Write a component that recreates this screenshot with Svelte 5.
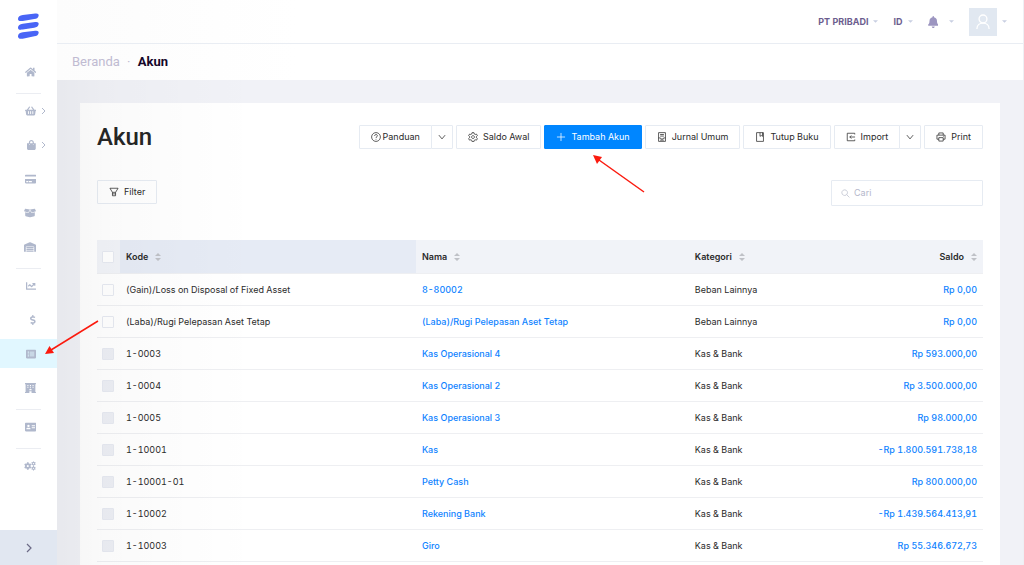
<script>
  const icons = {
    home: { w: 576, d: 'M280.37 148.26L96 300.11V464a16 16 0 0 0 16 16l112.06-.29a16 16 0 0 0 15.92-16V368a16 16 0 0 1 16-16h64a16 16 0 0 1 16 16v95.64a16 16 0 0 0 16 16.05L464 480a16 16 0 0 0 16-16V300L295.67 148.26a12.19 12.19 0 0 0-15.3 0zM571.6 251.47L488 182.56V44.05a12 12 0 0 0-12-12h-56a12 12 0 0 0-12 12v72.61L318.47 43a48 48 0 0 0-61 0L4.34 251.47a12 12 0 0 0-1.6 16.9l25.5 31A12 12 0 0 0 45.15 301l235.22-193.74a12.19 12.19 0 0 1 15.3 0L530.9 301a12 12 0 0 0 16.9-1.6l25.5-31a12 12 0 0 0-1.7-16.93z' },
    basket: { w: 576, d: 'M576 216v16c0 13.255-10.745 24-24 24h-8l-26.113 182.788C514.509 462.435 494.257 480 470.37 480H105.63c-23.887 0-44.139-17.565-47.518-41.212L32 256h-8c-13.255 0-24-10.745-24-24v-16c0-13.255 10.745-24 24-24h67.341l106.78-146.821c10.395-14.292 30.407-17.453 44.701-7.058 14.293 10.395 17.453 30.408 7.058 44.701L170.477 192h235.046L326.12 82.821c-10.395-14.292-7.234-34.306 7.059-44.701 14.291-10.395 34.306-7.235 44.701 7.058L484.659 192H552c13.255 0 24 10.745 24 24zM312 392V280c0-13.255-10.745-24-24-24s-24 10.745-24 24v112c0 13.255 10.745 24 24 24s24-10.745 24-24zm112 0V280c0-13.255-10.745-24-24-24s-24 10.745-24 24v112c0 13.255 10.745 24 24 24s24-10.745 24-24zm-224 0V280c0-13.255-10.745-24-24-24s-24 10.745-24 24v112c0 13.255 10.745 24 24 24s24-10.745 24-24z' },
    bag: { w: 448, d: 'M352 160v-32C352 57.42 294.579 0 224 0 153.42 0 96 57.42 96 128v32H0v272c0 44.183 35.817 80 80 80h288c44.183 0 80-35.817 80-80V160h-96zm-192-32c0-35.29 28.71-64 64-64s64 28.71 64 64v32H160v-32zm160 120c-13.255 0-24-10.745-24-24s10.745-24 24-24 24 10.745 24 24-10.745 24-24 24zm-192 0c-13.255 0-24-10.745-24-24s10.745-24 24-24 24 10.745 24 24-10.745 24-24 24z' },
    card: { w: 576, d: 'M0 432c0 26.5 21.5 48 48 48h480c26.5 0 48-21.5 48-48V256H0v176zm192-68c0-6.6 5.4-12 12-12h136c6.6 0 12 5.4 12 12v40c0 6.6-5.4 12-12 12H204c-6.6 0-12-5.4-12-12v-40zm-128 0c0-6.6 5.4-12 12-12h72c6.6 0 12 5.4 12 12v40c0 6.6-5.4 12-12 12H76c-6.6 0-12-5.4-12-12v-40zM576 80v48H0V80c0-26.5 21.5-48 48-48h480c26.5 0 48 21.5 48 48z' },
    box: { w: 640, d: 'M425.7 256c-16.9 0-32.8-9-41.4-23.4L320 126l-64.2 106.6c-8.7 14.5-24.6 23.5-41.5 23.5-4.5 0-9-.6-13.3-1.9L64 215v178c0 14.7 10 27.5 24.2 31l216.2 54.1c10.2 2.5 20.9 2.5 31 0L551.8 424c14.2-3.6 24.2-16.4 24.2-31V215l-137 39.1c-4.3 1.3-8.8 1.9-13.3 1.9zm212.6-112.2L586.8 41c-3.1-6.2-9.8-9.8-16.7-8.9L320 64l91.7 152.1c3.8 6.3 11.4 9.3 18.5 7.3l197.9-56.5c9.9-2.9 14.7-13.9 10.2-23.1zM53.2 41L1.7 143.8c-4.6 9.2.3 20.2 10.1 23l197.9 56.5c7.1 2 14.7-1 18.5-7.3L320 64 69.8 32.1c-6.9-.8-13.5 2.7-16.6 8.9z' },
    warehouse: { w: 640, d: 'M504 352H136.4c-4.4 0-8 3.6-8 8l-.1 48c0 4.4 3.6 8 8 8H504c4.4 0 8-3.6 8-8v-48c0-4.4-3.6-8-8-8zm0 96H136.1c-4.4 0-8 3.6-8 8l-.1 48c0 4.4 3.6 8 8 8h368c4.4 0 8-3.6 8-8v-48c0-4.4-3.6-8-8-8zm0-192H136.6c-4.4 0-8 3.6-8 8l-.1 48c0 4.4 3.6 8 8 8H504c4.4 0 8-3.6 8-8v-48c0-4.4-3.6-8-8-8zm106.5-139L338.4 3.7a48.15 48.15 0 0 0-36.9 0L29.5 117C11.7 124.5 0 141.9 0 161.3V504c0 4.4 3.6 8 8 8h80c4.4 0 8-3.6 8-8V256c0-17.6 14.6-32 32.6-32h382.8c18 0 32.6 14.4 32.6 32v248c0 4.4 3.6 8 8 8h80c4.4 0 8-3.6 8-8V161.3c0-19.4-11.7-36.8-29.5-44.3z' },
    chart: { w: 512, d: 'M496 384H64V80c0-8.84-7.16-16-16-16H16C7.16 64 0 71.16 0 80v336c0 17.67 14.33 32 32 32h464c8.84 0 16-7.16 16-16v-32c0-8.84-7.16-16-16-16zM464 96H345.94c-21.38 0-32.09 25.85-16.97 40.97l32.4 32.4L288 242.75l-73.37-73.37c-12.5-12.5-32.76-12.5-45.25 0l-68.69 68.69c-6.25 6.25-6.25 16.38 0 22.63l22.62 22.62c6.25 6.25 16.38 6.25 22.63 0L192 237.25l73.37 73.37c12.5 12.5 32.76 12.5 45.25 0l96-96 32.4 32.4c15.12 15.12 40.97 4.41 40.97-16.97V112c.01-8.84-7.15-16-15.99-16z' },
    dollar: { w: 288, d: 'M209.2 233.4l-108-31.6C88.7 198.2 80 186.5 80 173.5c0-16.3 13.2-29.5 29.5-29.5h66.3c12.2 0 24.2 3.7 34.2 10.5 6.1 4.1 14.3 3.1 19.5-2l34.8-34c7.1-6.9 6.1-18.4-1.8-24.5C238 74.8 207.4 64.1 176 64V16c0-8.8-7.2-16-16-16h-32c-8.8 0-16 7.2-16 16v48h-2.5C45.8 64-5.4 118.7.5 183.6c4.2 46.1 39.4 83.6 83.8 96.6l102.5 30c12.5 3.7 21.2 15.3 21.2 28.3 0 16.3-13.2 29.5-29.5 29.5h-66.3C100 368 88 364.3 78 357.5c-6.1-4.1-14.3-3.1-19.5 2l-34.8 34c-7.1 6.9-6.1 18.4 1.8 24.5 24.5 19.2 55.1 29.9 86.5 30v48c0 8.8 7.2 16 16 16h32c8.8 0 16-7.2 16-16v-48.2c46.6-.9 90.3-28.6 105.7-72.7 21.5-61.6-14.6-124.8-72.5-141.7z' },
    list: { w: 512, d: 'M464 480H48c-26.500 0-48-21.500-48-48V80c0-26.500 21.500-48 48-48h416c26.500 0 48 21.500 48 48v352c0 26.500-21.500 48-48 48zM90 132v56h56v-56zM90 228v56h56v-56zM90 324v56h56v-56zM190 140v40h232v-40zM190 236v40h232v-40zM190 332v40h232v-40z' },
    hospital: { w: 560, d: 'M0 4h560v54h-30v400h30v50H336v-90H224v90H0v-50h30V58H0zM120 104v48h56v-48zM252 104v48h56v-48zM384 104v48h56v-48zM120 196v48h56v-48zM252 196v48h56v-48zM384 196v48h56v-48zM260 290v36h-40v40h120v-40h-40v-36z' },
    idcard: { w: 576, d: 'M48 32h480c26.500 0 48 21.500 48 48v352c0 26.500-21.500 48-48 48H48c-26.500 0-48-21.500-48-48V80c0-26.500 21.500-48 48-48zM176 140a60 60 0 1 0 1 0zM72 376h208v-30c0-40-30-56-56-56h-96c-26 0-56 16-56 56zM344 170v44h168v-44zM344 270v44h168v-44z' },
    cogs: { w: 640, d: 'M160 60h84l12 56 38 22 54-18 42 72-42 38v52l42 38-42 72-54-18-38 22-12 56h-84l-12-56-38-22-54 18-42-72 42-38v-52l-42-38 42-72 54 18 38-22zM202 200a56 56 0 1 0 1 0zM482 10h50l8 32 24 14 32-10 25 43-24 23v28l24 23-25 43-32-10-24 14-8 32h-50l-8-32-24-14-32 10-25-43 24-23v-28l-24-23 25-43 32 10 24-14zM507 92a34 34 0 1 0 1 0zM482 262h50l8 32 24 14 32-10 25 43-24 23v28l24 23-25 43-32-10-24 14-8 32h-50l-8-32-24-14-32 10-25-43 24-23v-28l-24-23 25-43 32 10 24-14zM507 344a34 34 0 1 0 1 0z' },
    bell: { w: 448, d: 'M224 512c35.32 0 63.97-28.65 63.97-64H160.03c0 35.35 28.65 64 63.97 64zm215.39-149.71c-19.32-20.76-55.47-51.99-55.47-154.29 0-77.7-54.48-139.9-127.94-155.16V32c0-17.67-14.32-32-31.98-32s-31.98 14.33-31.98 32v20.84C118.56 68.1 64.08 130.3 64.08 208c0 102.3-36.15 133.53-55.47 154.29-6 6.45-8.66 14.16-8.61 21.71.11 16.4 12.98 32 32.1 32h383.8c19.12 0 32-15.6 32.1-32 .05-7.55-2.61-15.27-8.61-21.71z' }
  };

  // Thin outlined icons, drawn on a 16 unit grid
  const outlines = {
    help: 'M8 1a7 7 0 1 0 .01 0zM5.800 6.300c0-3 4.400-3 4.400-.3 0 1.500-2.200 1.800-2.200 3.500M8 11v1.200',
    gear: 'M6.500 1h3l.5 2.200 1.400.8 2.100-.7 1.500 2.600-1.600 1.500v1.600l1.600 1.500-1.500 2.600-2.100-.7-1.400.8-.5 2.200h-3L6 13.200l-1.400-.8-2.100.7L1 10.500 2.600 9V7.400L1 5.900l1.500-2.600 2.100.7L6 3.200zM8 5.800a2.300 2.300 0 1 0 .01 0z',
    plus: 'M8 1.500v13M1.500 8h13',
    journal: 'M2.500 1h11v14h-11zM5 4h6M5 6.500h6M2.500 9.500h3l1 1.800h3l1-1.800h3M5 13h6',
    book: 'M2.500 1h11v14h-11zM8 1v6l2-1.500L12 7V1',
    import: 'M14 4V2H2v12h12v-2M14.500 8H6M8.500 5.500L6 8l2.500 2.500',
    print: 'M4.500 5V1.500h7V5M4.500 11.500h-3V5h13v6.500h-3M4.500 9h7v5.500h-7zM11.500 7h1',
    filter: 'M1.500 2h13l-4 6.500h-5zM5.500 8.500V14h5V8.500M5.500 11h5',
    search: 'M6.500 1.500a5 5 0 1 0 .01 0zM10.200 10.200L15 15',
    down: 'M3 5l5 6 5-6'
  };

  const groups = [
    [{ icon: 'home', label: 'Beranda' }],
    [
      { icon: 'basket', label: 'Penjualan', more: true },
      { icon: 'bag', label: 'Pembelian', more: true },
      { icon: 'card', label: 'Biaya' },
      { icon: 'box', label: 'Produk' },
      { icon: 'warehouse', label: 'Inventori' }
    ],
    [
      { icon: 'chart', label: 'Laporan' },
      { icon: 'dollar', label: 'Kas & Bank' },
      { icon: 'list', label: 'Akun', active: true },
      { icon: 'hospital', label: 'Aset Tetap' }
    ],
    [{ icon: 'idcard', label: 'Kontak' }],
    [{ icon: 'cogs', label: 'Pengaturan' }]
  ];

  const actions = [
    { icon: 'help', text: 'Panduan', split: true, tight: true },
    { icon: 'gear', text: 'Saldo Awal' },
    { icon: 'plus', text: 'Tambah Akun', primary: true },
    { icon: 'journal', text: 'Jurnal Umum' },
    { icon: 'book', text: 'Tutup Buku' },
    { icon: 'import', text: 'Import', split: true },
    { icon: 'print', text: 'Print' }
  ];

  const columns = ['Kode', 'Nama', 'Kategori', 'Saldo'];

  const rows = [
    ['(Gain)/Loss on Disposal of Fixed Asset', '8-80002', 'Beban Lainnya', 'Rp 0,00', false],
    ['(Laba)/Rugi Pelepasan Aset Tetap', '(Laba)/Rugi Pelepasan Aset Tetap', 'Beban Lainnya', 'Rp 0,00', false],
    ['1-0003', 'Kas Operasional 4', 'Kas & Bank', 'Rp 593.000,00', true],
    ['1-0004', 'Kas Operasional 2', 'Kas & Bank', 'Rp 3.500.000,00', true],
    ['1-0005', 'Kas Operasional 3', 'Kas & Bank', 'Rp 98.000,00', true],
    ['1-10001', 'Kas', 'Kas & Bank', '-Rp 1.800.591.738,18', true],
    ['1-10001-01', 'Petty Cash', 'Kas & Bank', 'Rp 800.000,00', true],
    ['1-10002', 'Rekening Bank', 'Kas & Bank', '-Rp 1.439.564.413,91', true],
    ['1-10003', 'Giro', 'Kas & Bank', 'Rp 55.346.672,73', true]
  ];
</script>

{#snippet glyph(name)}
  <svg class="glyph" viewBox="0 0 {icons[name].w} 512" aria-hidden="true"><path d={icons[name].d} fill="currentColor" fill-rule="evenodd" /></svg>
{/snippet}

{#snippet outline(name)}
  <svg class="outline" viewBox="0 0 16 16" aria-hidden="true"><path d={outlines[name]} /></svg>
{/snippet}

{#snippet caret()}
  <svg class="caret" viewBox="0 0 6 3" aria-hidden="true"><path d="M0 0h6L3 3z" fill="currentColor" /></svg>
{/snippet}

<div class="app">
  <aside class="sidebar">
    <a class="logo" href="#home" aria-label="Beranda">
      <svg viewBox="0 0 24 28" aria-hidden="true">
        <g fill="#4965f6">
          <path d="M1 6.500C1 3.500 3 2.500 6 2L19 .4c3-.4 4 .8 3.500 2.600C22 5 20.500 5.900 18 6.300L6 8.200C3 8.600 1.400 8.400 1 6.500z" />
          <path d="M1 15.500c0-3 2-4 5-4.500l13-1.600c3-.4 4 .8 3.500 2.600-.5 2-2 2.900-4.500 3.300L6 17.200c-3 .4-4.600.2-5-1.700z" />
          <path d="M1 24.500c0-3 2-4 5-4.500l13-1.600c3-.4 4 .8 3.500 2.600-.5 2-2 2.900-4.500 3.300L6 26.700c-3 .4-4.600.2-5-2.200z" />
        </g>
      </svg>
    </a>
    <nav aria-label="Menu utama">
      {#each groups as group}
        <div class="group">
          {#each group as item}
            <a class="item" class:active={item.active} href="#{item.icon}" aria-label={item.label}>
              {@render glyph(item.icon)}
              {#if item.more}
                <svg class="more" viewBox="0 0 5 8" aria-hidden="true"><path d="M1 1l3 3-3 3" /></svg>
              {/if}
            </a>
          {/each}
        </div>
      {/each}
    </nav>
    <button class="expand" aria-label="Perluas menu">
      <svg viewBox="0 0 6 10" aria-hidden="true"><path d="M1 1l4 4-4 4" /></svg>
    </button>
  </aside>

  <div class="page">
    <header class="topbar">
      <button class="menu">PT PRIBADI {@render caret()}</button>
      <button class="menu">ID {@render caret()}</button>
      <button class="menu notify" aria-label="Notifikasi">{@render glyph('bell')} {@render caret()}</button>
      <button class="menu" aria-label="Profil">
        <span class="avatar">
          <svg viewBox="0 0 16 18" aria-hidden="true"><circle cx="8" cy="5.500" r="4.500" /><path d="M1 17c0-9 14-9 14 0" /></svg>
        </span>
        {@render caret()}
      </button>
    </header>

    <nav class="crumbs" aria-label="Breadcrumb">
      <a href="#home">Beranda</a><span class="dot">·</span><span class="here">Akun</span>
    </nav>

    <main>
      <section class="panel">
        <div class="heading">
          <h1>Akun</h1>
          <div class="actions">
            {#each actions as a}
              <div class="split">
                <button class="btn" class:primary={a.primary} class:tight={a.tight}>{@render outline(a.icon)}{a.text}</button>
                {#if a.split}
                  <button class="btn toggle" aria-label="Opsi {a.text}">{@render outline('down')}</button>
                {/if}
              </div>
            {/each}
          </div>
        </div>

        <div class="tools">
          <button class="btn">{@render outline('filter')}Filter</button>
          <label class="search">
            {@render outline('search')}
            <input type="search" placeholder="Cari" aria-label="Cari" />
          </label>
        </div>

        <table>
          <colgroup>
            <col class="c-check" /><col class="c-code" /><col class="c-name" /><col /><col />
          </colgroup>
          <thead>
            <tr>
              <th class="check"><input type="checkbox" aria-label="Pilih semua" /></th>
              {#each columns as c, i}
                <th class:sorted={i === 0} class:num={i === 3}>
                  <button class="sort">{c}
                    <svg viewBox="0 0 6 10" aria-hidden="true"><path d="M3 1l3 3H0zM3 9L0 6h6z" fill="currentColor" /></svg>
                  </button>
                </th>
              {/each}
            </tr>
          </thead>
          <tbody>
            {#each rows as [code, name, category, balance, locked]}
              <tr>
                <td class="check"><input type="checkbox" disabled={locked} aria-label="Pilih {code}" /></td>
                <td>{code}</td>
                <td><a href="#akun">{name}</a></td>
                <td>{category}</td>
                <td class="num"><a href="#saldo">{balance}</a></td>
              </tr>
            {/each}
          </tbody>
        </table>
      </section>
    </main>
  </div>

  <svg class="pointer to-add" viewBox="0 0 52 38" aria-hidden="true">
    <path d="M51 37L6 5" stroke="#fb1a0e" stroke-width="1.500" /><path d="M0 0l9 2-5 7z" fill="#fb1a0e" />
  </svg>
  <svg class="pointer to-menu" viewBox="0 0 54 35" aria-hidden="true">
    <path d="M53 1L6 30" stroke="#fb1a0e" stroke-width="1.500" /><path d="M0 34l4.500-8 4.500 7z" fill="#fb1a0e" />
  </svg>
</div>

<style>
  :global(body) {
    background: #fff;
    color: #2b2b2b;
    font: 400 9px/16px Inter, "Open Sans", sans-serif;
    font-variant-numeric: tabular-nums;
  }
  a { color: inherit; text-decoration: none; }
  button, input { font: inherit; color: inherit; box-sizing: border-box; }
  button { border: 0; background: none; padding: 0; cursor: pointer; }

  .app { position: relative; display: flex; min-height: 100vh; overflow: hidden; }

  .sidebar {
    flex: none;
    width: 57px;
    display: flex;
    flex-direction: column;
    color: #b0b8cc;
  }
  .logo { display: block; height: 44px; padding: 13px 0 0 17px; }
  .logo svg { display: block; width: 23px; height: 27px; }
  .group + .group::before {
    content: "";
    display: block;
    height: 1px;
    margin: 7px 16px 2px;
    background: #ebedf2;
  }
  .item { position: relative; display: flex; align-items: center; justify-content: flex-end; height: 29px; padding-right: 21px; }
  .item + .item { margin-top: 5px; }
  .item.active { background: #e1f7ff; }
  .glyph { display: block; height: 10px; width: auto; max-width: 12px; }
  .more { position: absolute; right: 11px; width: 5px; height: 8px; fill: none; stroke: currentColor; }
  .expand { display: flex; align-items: center; justify-content: center; height: 35px; margin-top: auto; background: #e1e7f1; }
  .expand svg { width: 6px; height: 10px; fill: none; stroke: #6b6a86; stroke-width: 1.200; }

  .page { flex: 1; min-width: 0; display: flex; flex-direction: column; border-right: 1px solid #eef0f4; }

  .topbar {
    display: flex;
    align-items: center;
    justify-content: flex-end;
    height: 44px;
    padding-right: 16px;
    border-bottom: 1px solid #e9edf3;
    box-sizing: border-box;
    background: linear-gradient(to right, #fcfcfc, #fff 240px);
    color: #6c5d8e;
    font-weight: 700;
  }
  .menu { display: flex; align-items: center; gap: 5px; }
  .menu + .menu { margin-left: 15px; }
  .caret { display: block; width: 5px; height: 3px; color: #c9cfe2; }
  .notify { gap: 11px; }
  .notify .glyph { height: 12px; color: #9c95c0; }
  .avatar { display: grid; place-items: center; width: 28px; height: 28px; background: #e1e8f1; }
  .avatar svg { width: 14px; height: 16px; fill: none; stroke: #fff; stroke-width: 1.500; }

  .crumbs {
    display: flex;
    align-items: center;
    height: 36px;
    padding-left: 15px;
    background: linear-gradient(to right, #fcfcfc, #fff 240px);
    color: #c0bbd2;
    font-family: Roboto, Inter, sans-serif;
    font-size: 13px;
  }
  .dot { width: 18px; text-align: center; }
  .here { color: #150629; font-weight: 700; }

  main {
    position: relative;
    flex: 1;
    display: flex;
    padding: 23px 23px 0;
    background: #f1f2f7;
  }
  /* Soft shade cast by the sidebar */
  main::after {
    content: "";
    position: absolute;
    inset: 0 auto 0 0;
    width: 200px;
    background: linear-gradient(to right, rgba(0, 0, 0, 0.040), rgba(0, 0, 0, 0.020) 25%, transparent);
    pointer-events: none;
  }
  .panel { flex: 1; min-width: 0; padding: 20px 17px 0; background: #fff; }

  .heading { display: flex; align-items: center; justify-content: space-between; height: 28px; }
  h1 { margin: 0; font-family: Roboto, Inter, sans-serif; font-size: 24px; line-height: 28px; font-weight: 500; color: #262626; }
  .actions { display: flex; gap: 3px; }
  .split { display: flex; }
  .btn {
    display: flex;
    align-items: center;
    gap: 5px;
    height: 24px;
    padding: 0 11px;
    border: 1px solid #e6ebf2;
    border-radius: 1px;
    background: #fff;
    white-space: nowrap;
  }
  .btn.tight { gap: 2px; }
  .btn.primary { background: #0086ff; border-color: #0086ff; color: #fff; }
  .btn.toggle { padding: 0 5px; margin-left: -1px; }
  .outline { flex: none; display: block; width: 10px; height: 10px; fill: none; stroke: currentColor; stroke-width: 1.200; }

  .tools { display: flex; align-items: flex-start; justify-content: space-between; padding: 29px 0 34px; }
  .search { display: flex; align-items: center; gap: 4px; width: 152px; height: 26px; padding: 0 9px; border: 1px solid #e6ebf2; border-radius: 1px; box-sizing: border-box; color: #b5b9c8; }
  .search .outline { width: 9px; height: 9px; }
  .search input { flex: 1; min-width: 0; padding: 0; border: 0; outline: 0; background: none; color: #333; }
  .search input::placeholder { color: #b4b7cb; opacity: 1; }

  table { width: 100%; border-collapse: separate; border-spacing: 0; table-layout: fixed; }
  .c-check { width: 23px; }
  .c-code { width: 33.4%; }
  .c-name { width: 30.8%; }
  th, td { box-sizing: border-box; padding: 0 6px; text-align: left; border-bottom: 1px solid #eeeff2; }
  th { height: 34px; background: #f1f3f8; font-weight: 600; }
  th.sorted { background: #e6ebf5; }
  td { height: 32px; }
  td a { color: #0f83ff; font-weight: 500; }
  .num { text-align: right; }
  th.check, td.check { padding: 0 0 0 5px; }
  .sort { display: inline-flex; align-items: center; gap: 7px; font-weight: 600; }
  .sort svg { width: 6px; height: 10px; color: #bfc1c7; }
  input[type="checkbox"] {
    appearance: none;
    display: block;
    width: 12px;
    height: 12px;
    margin: 0;
    border: 1px solid #e6e9f1;
    border-radius: 1px;
    background: #fff;
  }
  input[type="checkbox"]:disabled { background: #eceef4; }

  .pointer { position: absolute; fill: none; pointer-events: none; }
  .to-add { left: 593px; top: 155px; width: 52px; height: 38px; }
  .to-menu { left: 45px; top: 320px; width: 54px; height: 35px; }
</style>
